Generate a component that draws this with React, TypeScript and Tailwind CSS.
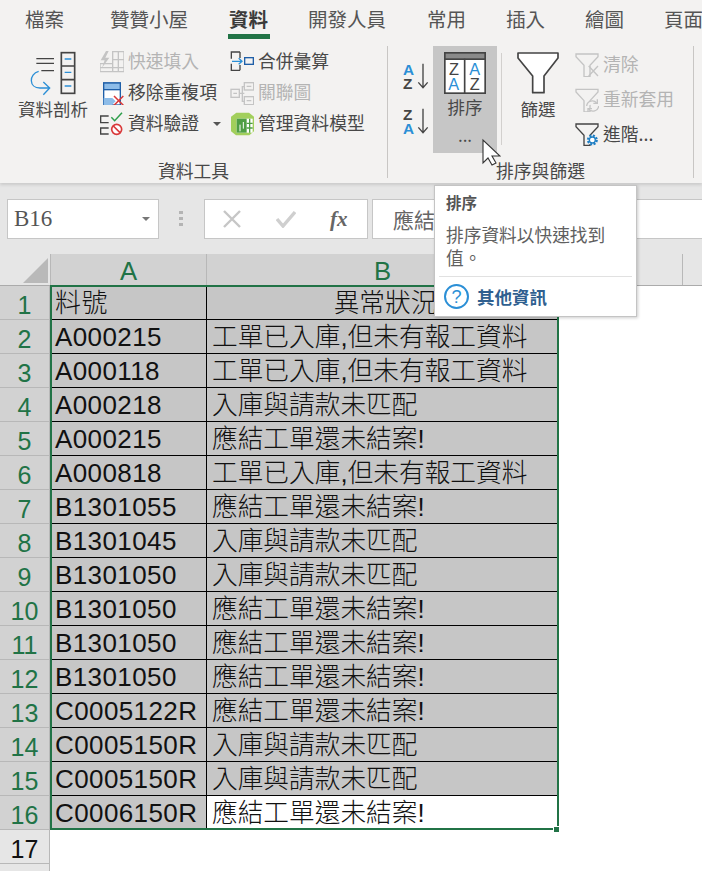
import type { ReactNode } from "react";

const DARK = "#444444";
const BLUE = "#2b8fd6";

const tabs = ["檔案", "贊贊小屋", "資料", "開發人員", "常用", "插入", "繪圖", "頁面"];
const tabGap = ["mr-[6px]", "mr-[1px]", "", "mr-[1px]", "", "", "", ""];

const rows = [
  ["料號", "異常狀況"],
  ["A000215", "工單已入庫,但未有報工資料"],
  ["A000118", "工單已入庫,但未有報工資料"],
  ["A000218", "入庫與請款未匹配"],
  ["A000215", "應結工單還未結案!"],
  ["A000818", "工單已入庫,但未有報工資料"],
  ["B1301055", "應結工單還未結案!"],
  ["B1301045", "入庫與請款未匹配"],
  ["B1301050", "入庫與請款未匹配"],
  ["B1301050", "應結工單還未結案!"],
  ["B1301050", "應結工單還未結案!"],
  ["B1301050", "應結工單還未結案!"],
  ["C0005122R", "應結工單還未結案!"],
  ["C0005150R", "入庫與請款未匹配"],
  ["C0005150R", "入庫與請款未匹配"],
  ["C0006150R", "應結工單還未結案!"],
];

function Cmd({ icon, label, disabled, h = "h-[31px]" }: { icon: ReactNode; label: string; disabled?: boolean; h?: string }) {
  return (
    <div className={`flex items-center ${h}`}>
      <div className="w-[24px] h-[24px] shrink-0">{icon}</div>
      <span className={`ml-[4px] pb-[2px] text-[17.8px] leading-none whitespace-nowrap ${disabled ? "text-[#b4b4b4]" : "text-[#484848]"}`}>
        {label}
      </span>
    </div>
  );
}

function Icon({ x, y, children }: { x: number; y: number; children: ReactNode }) {
  return (
    <svg width="24" height="24" viewBox={`${x} ${y} 72 72`} fill="none">
      {children}
    </svg>
  );
}

function TextToColumns() {
  return (
    <svg width="50" height="48" viewBox="80 150 150 144" fill="none">
      <path d="M105 176h53M105 190h53M120 212h38" stroke={DARK} strokeWidth="4" />
      <rect x="180" y="158" width="40" height="122" stroke={DARK} strokeWidth="5" />
      <path d="M180 198h40M180 239h40" stroke={DARK} strokeWidth="5" />
      <path d="M190 177h20M190 217h20M190 258h20" stroke={BLUE} strokeWidth="4" />
      <path d="M112 214c-30 8-30 50 4 50h26M126 246l19 18-19 20" stroke={BLUE} strokeWidth="4" />
    </svg>
  );
}

function SortAZ({ flip }: { flip?: boolean }) {
  return (
    <svg width="27" height="28" viewBox="0 0 81 84" className="block overflow-visible">
      <text x="0" y="36" fontSize="46" fontWeight="700" fill={flip ? DARK : BLUE} fontFamily="Liberation Sans">
        {flip ? "Z" : "A"}
      </text>
      <text x="0" y="78" fontSize="46" fontWeight="700" fill={flip ? BLUE : DARK} fontFamily="Liberation Sans">
        {flip ? "A" : "Z"}
      </text>
      <path d="M60 2v72M46 58l14 16 14-16" stroke={DARK} strokeWidth="4" fill="none" />
    </svg>
  );
}

function SortBig() {
  return (
    <svg width="42" height="42" viewBox="0 0 126 126" className="block">
      <rect x="2.5" y="2.5" width="121" height="121" fill="#fff" stroke={DARK} strokeWidth="5" />
      <rect x="2.5" y="2.5" width="121" height="19" fill="#8a8a8a" stroke={DARK} strokeWidth="5" />
      <path d="M62 20v104" stroke={DARK} strokeWidth="5" />
      <g fontFamily="Liberation Sans" fontSize="49">
        <text x="15" y="69" fill={DARK}>Z</text>
        <text x="13" y="114" fill={BLUE}>A</text>
        <text x="76" y="69" fill={BLUE}>A</text>
        <text x="77" y="114" fill={DARK}>Z</text>
      </g>
    </svg>
  );
}

function FilterBig() {
  return (
    <svg width="42" height="42" viewBox="0 0 126 126" className="block">
      <path d="M3 3h120v15L81 72v50H47V72L3 18z" fill="#fff" stroke={DARK} strokeWidth="5" strokeLinejoin="round" />
    </svg>
  );
}

function Ribbon() {
  return (
    <div className="h-[183px] bg-[#f3f2f1] shadow-[0_2px_3px_rgba(0,0,0,0.12)] relative">
      <div className="flex h-[39px] pl-[25px] gap-[40px] overflow-hidden">
        {tabs.map((t, i) => (
          <div key={t} className={`relative shrink-0 pt-[5px] text-[19.5px] leading-[27px] ${tabGap[i]} ${t === "資料" ? "font-bold text-[#3b3b3b]" : "text-[#555555]"}`}>
            {t}
            {t === "資料" && <div className="absolute left-[-1px] right-[-2px] top-[34px] h-[5px] bg-[#217346]" />}
          </div>
        ))}
      </div>
      <div className="flex h-[137px] mt-[7px] relative">
        <div className="w-[388px] h-[132px] border-r border-[#c8c6c4] flex flex-col">
          <div className="flex h-[107px] shrink-0 pl-[18px]">
            <div className="w-[70px] flex flex-col items-center pt-[4px]">
              <TextToColumns />
              <span className="mt-[1px] text-[17.5px] leading-[20px] text-[#484848] whitespace-nowrap">資料剖析</span>
            </div>
            <div className="w-[130px] ml-[12px]">
              <Cmd disabled label="快速填入" icon={
                <Icon x={300} y={147}>
                  <path d="M338 152h34v60h-72v-24h38zM302 200h70M338 152v60M355 152v60M338 176h34" stroke="#c4c4c4" strokeWidth="4" />
                  <path d="M318 150l-16 28h12l-8 22 22-30h-12l10-20z" fill="#c4c4c4" />
                </Icon>
              } />
              <Cmd label="移除重複項" icon={
                <Icon x={300} y={237}>
                  <rect x="311" y="243" width="50" height="66" fill="#fff" stroke="#1f5fa8" strokeWidth="4" />
                  <rect x="311" y="243" width="50" height="20" fill="#8dbce8" stroke="#1f5fa8" strokeWidth="4" />
                  <path d="M311 288h26l10 10-12 11h-24z" fill="#8dbce8" />
                  <path d="M342 282l28 28M370 282l-28 28" stroke="#d9393a" strokeWidth="4.5" />
                </Icon>
              } />
              <div className="flex items-center">
                <Cmd label="資料驗證" icon={
                  <Icon x={300} y={334}>
                    <path d="M326 346h-24v20h24M326 382h-24v18h24" stroke={DARK} strokeWidth="4" />
                    <path d="M334 350l10 10 22-24" stroke="#2e9e4b" strokeWidth="4.5" />
                    <circle cx="350" cy="386" r="15" stroke="#d9393a" strokeWidth="5" fill="#fff" />
                    <path d="M340 376l20 20" stroke="#d9393a" strokeWidth="5" />
                  </Icon>
                } />
                <div className="ml-[14px] mt-[1px] w-0 h-0 border-x-[4px] border-x-transparent border-t-[4px] border-t-[#555555]" />
              </div>
            </div>
            <div>
              <Cmd label="合併彙算" icon={
                <Icon x={692} y={147}>
                  <path d="M722 153h-26v20M696 188v20h26M722 153v18M722 192v16" stroke={DARK} strokeWidth="4" />
                  <rect x="736" y="170" width="26" height="20" stroke="#1f5fa8" strokeWidth="4" />
                  <path d="M698 181h30M718 172l10 9-10 9" stroke={BLUE} strokeWidth="4" />
                </Icon>
              } />
              <Cmd disabled label="關聯圖" icon={
                <Icon x={692} y={237}>
                  <rect x="695" y="262" width="25" height="24" stroke="#c4c4c4" strokeWidth="4" />
                  <rect x="735" y="242" width="28" height="22" stroke="#c4c4c4" strokeWidth="4" />
                  <rect x="735" y="284" width="28" height="24" stroke="#c4c4c4" strokeWidth="4" />
                  <path d="M720 274h15M735 254h-6v44h6M702 274h11M742 253h14M742 296h14" stroke="#c4c4c4" strokeWidth="4" />
                </Icon>
              } />
              <Cmd label="管理資料模型" icon={
                <Icon x={692} y={334}>
                  <path d="M695 348l16-12h38l15 12v44l-14 12h-40l-15-12z" fill="#a2cf5c" />
                  <path d="M712 354h48v42h-48z" fill="#fff" />
                  <path d="M712 354h30v42h-30z" fill="#4f9e45" />
                  <path d="M742 368h18M742 382h18M751 354v42" stroke="#4f9e45" strokeWidth="4" />
                  <path d="M722 392v-20M732 364v20" stroke="#fff" strokeWidth="3" />
                </Icon>
              } />
            </div>
          </div>
          <div className="shrink-0 mt-[5px] text-center text-[17.8px] leading-[24px] text-[#484848]">資料工具</div>
        </div>
        <div className="w-[306px] h-[132px] border-r border-[#c8c6c4] flex flex-col">
          <div className="flex h-[107px] shrink-0">
            <div className="w-[45px] pl-[15px] pt-[17px] flex flex-col gap-[17px]">
              <SortAZ />
              <SortAZ flip />
            </div>
            <div className="w-[64px] h-[107px] bg-[#c6c6c6] flex flex-col items-center pt-[6px]">
              <SortBig />
              <span className="mt-[3px] text-[17.5px] leading-[20px] text-[#484848]">排序</span>
              <span className="mt-[8px] text-[17px] leading-[20px] text-[#484848]">...</span>
            </div>
            <div className="w-px h-[92px] mt-[7px] ml-[4px] bg-[#d2d0ce]" />
            <div className="w-[60px] ml-[6px] flex flex-col items-center pt-[6px]">
              <FilterBig />
              <span className="mt-[5px] text-[17.5px] leading-[20px] text-[#484848]">篩選</span>
            </div>
            <div className="ml-[7px] pt-[7px] flex flex-col gap-[11px]">
              <Cmd h="h-[24px]" disabled label="清除" icon={
                <svg width="24" height="24" viewBox="585 159 72 72" fill="none">
                  <path d="M588 162h66v8l-24 26v34h-18v-34l-24-26z" fill="#f3f2f1" stroke="#c4c4c4" strokeWidth="4" />
                  <path d="M626 198l28 30M654 198l-28 30" stroke="#c4c4c4" strokeWidth="4" />
                </svg>
              } />
              <Cmd h="h-[24px]" disabled label="重新套用" icon={
                <svg width="24" height="24" viewBox="585 264 72 72" fill="none">
                  <path d="M588 268h66v8l-24 26v34h-18v-34l-24-26z" fill="#f3f2f1" stroke="#c4c4c4" strokeWidth="4" />
                  <path d="M620 318a17 17 0 0 1 30-9M656 318a17 17 0 0 1-30 9" stroke="#c4c4c4" strokeWidth="4" fill="#f3f2f1" />
                  <path d="M652 298v12h-12M624 338v-12h12" stroke="#c4c4c4" strokeWidth="4" />
                </svg>
              } />
              <Cmd h="h-[24px]" label="進階..." icon={
                <svg width="24" height="24" viewBox="585 369 72 72" fill="none">
                  <path d="M588 372h66v8l-24 26v30h-18v-30l-24-26z" fill="#f3f2f1" stroke={DARK} strokeWidth="4" />
                  <circle cx="637" cy="420" r="15" fill="#f3f2f1" />
                  <circle cx="637" cy="420" r="13" stroke="#1f7fc4" strokeWidth="7" strokeDasharray="6 4.2" />
                  <circle cx="637" cy="420" r="9" stroke="#1f7fc4" strokeWidth="4" fill="#fff" />
                </svg>
              } />
            </div>
          </div>
          <div className="shrink-0 mt-[5px] text-center text-[17.8px] leading-[24px] text-[#484848]">排序與篩選</div>
        </div>
      </div>
    </div>
  );
}

function FormulaBar() {
  return (
    <div className="h-[71px] bg-[#e6e6e6] pt-[16px] flex items-start">
      <div className="ml-[7px] w-[152px] h-[40px] bg-white border border-[#c6c6c6] flex items-center justify-between pl-[6px] pr-[8px]">
        <span className="font-['Liberation_Serif',serif] text-[23px] text-[#555555]">B16</span>
        <div className="w-0 h-0 border-x-[4px] border-x-transparent border-t-[4px] border-t-[#777777]" />
      </div>
      <div className="ml-[20px] mt-[12px] flex flex-col gap-[3px] w-[4px]">
        <div className="h-[3px] bg-[#b4b4b4]" />
        <div className="h-[3px] bg-[#b4b4b4]" />
        <div className="h-[3px] bg-[#b4b4b4]" />
      </div>
      <div className="ml-[21px] w-[164px] h-[40px] bg-white border border-[#c6c6c6] flex items-center">
        <svg width="20" height="20" viewBox="0 0 20 20" className="ml-[17px]">
          <path d="M2 2l16 16M18 2L2 18" stroke="#c6c6c6" strokeWidth="2.4" fill="none" />
        </svg>
        <svg width="20" height="18" viewBox="0 0 20 18" className="ml-[34px]">
          <path d="M1 9l6 7L19 2" stroke="#cfcfcf" strokeWidth="3.4" fill="none" />
        </svg>
        <span className="ml-[34px] font-['Liberation_Serif',serif] italic font-bold text-[21px] leading-none text-[#666666]">fx</span>
      </div>
      <div className="ml-[4px] flex-1 h-[40px] bg-white border-y border-l border-[#c6c6c6] pl-[20px] text-[21px] leading-[38px] text-[#666666] whitespace-nowrap overflow-hidden">
        應結工單還未結案!
      </div>
    </div>
  );
}

function Sheet() {
  return (
    <div className="relative bg-white font-['Liberation_Sans','Noto_Sans_CJK_TC',sans-serif] text-[25.7px] font-light text-[#111111]">
      <div className="flex h-[32px] bg-[#e6e6e6] border-b border-[#ababab]">
        <div className="w-[50px] h-[31px] relative">
          <div className="absolute right-[2px] bottom-[2px] w-0 h-0 border-l-[25px] border-l-transparent border-b-[25px] border-b-[#b9b9b9]" />
        </div>
        <div className="w-[157px] bg-[#d2d2d2] border-x border-[#b8b8b8] text-center text-[#217346] leading-[35px]">A</div>
        <div className="w-[352px] bg-[#d2d2d2] border-r border-[#b8b8b8] text-center text-[#217346] leading-[35px]">B</div>
        <div className="w-[124px] border-r border-[#b8b8b8]" />
      </div>
      <div className="relative">
        {rows.map((r, i) => (
          <div key={i} className="flex h-[34px]">
            <div className="w-[50px] bg-[#d2d2d2] border-r border-b border-[#b8b8b8] text-center text-[#217346] text-[25px] leading-[38px] overflow-hidden">{i + 1}</div>
            <div className="w-[157px] pl-[5px] bg-[#c6c6c6] border-r border-b border-black text-[26px] tracking-[0.4px] leading-[35px] whitespace-nowrap overflow-hidden">{r[0]}</div>
            <div className={`w-[351px] pl-[5px] border-b border-black leading-[35px] whitespace-nowrap overflow-hidden ${i === 15 ? "bg-white" : "bg-[#c6c6c6]"} ${i === 0 ? "text-center" : ""}`}>{r[1]}</div>
          </div>
        ))}
        <div className="absolute left-[50px] top-[-1px] w-[509px] h-[545px] border-2 border-[#217346] pointer-events-none" />
        <div className="absolute left-[553px] top-[540px] w-[7px] h-[7px] bg-[#217346] border border-white" />
      </div>
      <div className="flex h-[34px]">
        <div className="w-[50px] bg-[#e6e6e6] border-r border-b border-[#b8b8b8] text-center text-[25px] leading-[38px] overflow-hidden">17</div>
      </div>
      <div className="w-[50px] h-[7px] bg-[#e6e6e6] border-r border-[#b8b8b8]" />
    </div>
  );
}

function Tooltip() {
  return (
    <div className="absolute left-[434px] top-[185px] w-[203px] h-[132px] bg-white border border-[#c4c4c4] shadow-[1px_1px_3px_rgba(0,0,0,0.2)] text-[#606060]">
      <div className="pl-[11px] pt-[4px] text-[15.5px] leading-[24px] font-bold text-[#555555]">排序</div>
      <div className="pl-[11px] pt-[9px] text-[17.7px] leading-[23px]">
        排序資料以快速找到
        <br />
        值。
      </div>
      <div className="mx-[4px] mt-[7px] h-px bg-[#e1e1e1]" />
      <div className="flex items-center pl-[9px] pt-[7px]">
        <svg width="25" height="25" viewBox="0 0 25 25" fill="none">
          <circle cx="12.5" cy="12.5" r="11.5" stroke={BLUE} strokeWidth="2" />
          <text x="12.5" y="19" textAnchor="middle" fontSize="18" fill={BLUE} fontFamily="Liberation Sans">?</text>
        </svg>
        <span className="ml-[8px] text-[17.5px] leading-none font-bold text-[#2f5f8f]">其他資訊</span>
      </div>
    </div>
  );
}

export default function App() {
  return (
    <div className="relative w-[702px] h-[871px] overflow-hidden bg-white font-['Noto_Sans_CJK_TC',sans-serif]">
      <Ribbon />
      <FormulaBar />
      <Sheet />
      <Tooltip />
      <svg width="20" height="28" viewBox="0 0 20 28" className="absolute left-[481px] top-[138px]">
        <path d="M2 2v23l5-5 4 7 4-2-4-7h8z" fill="#fff" stroke="#333" strokeWidth="1.1" />
      </svg>
    </div>
  );
}
